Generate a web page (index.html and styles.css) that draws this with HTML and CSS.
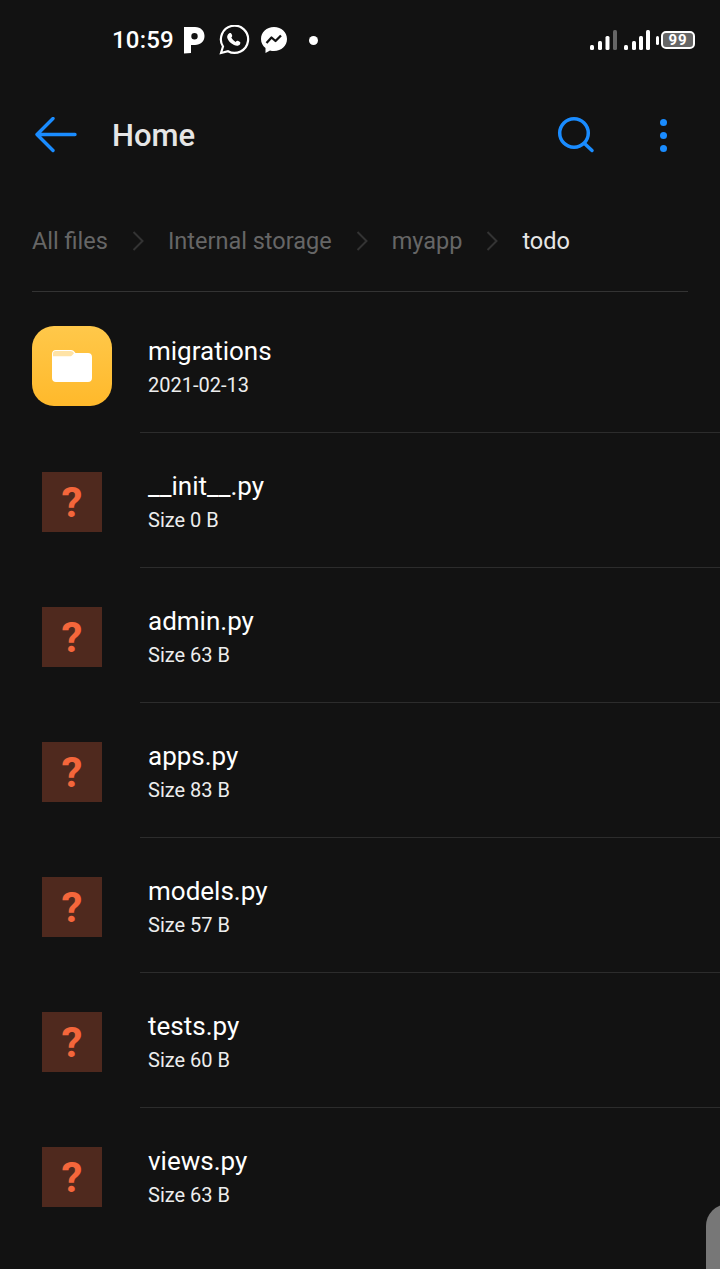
FILE: index.html
```html
<!DOCTYPE html>
<html lang="en">
<head>
    <meta charset="UTF-8">
    <meta name="viewport" content="width=device-width, initial-scale=1.0">
    <title>Home</title>
    <link rel="stylesheet" href="styles.css">
</head>
<body>

<div class="tela">
    <!-- Status bar -->
    <div class="status">
        <span class="hora">10:59</span>
        <svg class="ic-p" width="22" height="28" viewBox="0 0 22 28">
            <path fill="#fff" fill-rule="evenodd" d="M1 1H12C18 1 21.500 5 21.500 10C21.500 15.500 17.500 19 12 19H8V27L1 27.500ZM11.500 7A3.200 3.200 0 1 0 11.510 13.400A3.200 3.200 0 1 0 11.500 7Z"/>
        </svg>
        <svg class="ic-wa" width="32" height="30" viewBox="0 0 32 30">
            <path fill="none" stroke="#fff" stroke-width="2.200" d="M3 28L5 21.500A13.600 13.600 0 1 1 10 26.200Z"/>
            <path fill="#fff" d="M11 8.500C12.500 7.500 13.200 8 14 10C14.500 11.200 14 11.800 13.300 12.600C14.200 14.500 15.800 16 17.700 17C18.500 16 19.200 15.500 20.400 16.100C22.500 17.100 22.800 17.700 22 19.200C21 21 18.500 21 16 20C12.500 18.400 10.200 15.700 9.300 13C8.800 11.200 9.700 9.500 11 8.500Z"/>
        </svg>
        <svg class="ic-ms" width="28" height="28" viewBox="0 0 28 28">
            <path fill="#fff" d="M14 1C6.500 1 1 6.300 1 13C1 16.800 2.700 19.800 5.500 22V27L10 24.400C11.300 24.800 12.600 25 14 25C21.500 25 27 19.700 27 13C27 6.300 21.500 1 14 1Z"/>
            <path fill="none" stroke="#121212" stroke-width="2.300" stroke-linejoin="round" d="M6.500 17L11.500 11.500L15.500 15L21 9.500"/>
        </svg>
        <span class="ponto"></span>
        <div class="status-dir">
            <svg width="60" height="22" viewBox="0 0 60 22">
                <g fill="#fff">
                    <rect x="0" y="16" width="4" height="5" rx="1.500"/>
                    <rect x="8" y="12" width="4" height="9" rx="1.500"/>
                    <rect x="15.500" y="7" width="4" height="14" rx="1.500"/>
                    <rect x="23" y="1" width="4" height="20" rx="1.500" fill="#666"/>
                    <rect x="34" y="16" width="4" height="5" rx="1.500"/>
                    <rect x="42" y="12" width="4" height="9" rx="1.500"/>
                    <rect x="49" y="7" width="4" height="14" rx="1.500"/>
                    <rect x="56" y="1" width="4" height="20" rx="1.500"/>
                </g>
            </svg>
            <span class="bat-ponta"></span>
            <span class="bateria">99</span>
        </div>
    </div>

    <!-- Toolbar -->
    <div class="topo">
        <svg class="voltar" width="42" height="36" viewBox="0 0 42 36">
            <path fill="none" stroke="#1a8cff" stroke-width="3.400" stroke-linecap="round" stroke-linejoin="round" d="M18 1.500L2 17.500L18 33.500M2 17.500H40"/>
        </svg>
        <h1 class="titulo">Home</h1>
        <svg class="busca" width="38" height="38" viewBox="0 0 38 38">
            <circle cx="17" cy="17" r="14.300" fill="none" stroke="#1a8cff" stroke-width="3.500"/>
            <path fill="none" stroke="#1a8cff" stroke-width="3.500" stroke-linecap="round" d="M27.500 27.500L35 34.500"/>
        </svg>
        <div class="mais"><span></span><span></span><span></span></div>
    </div>

    <!-- Breadcrumb -->
    <div class="trilha">
        <span>All files</span>
        <svg class="seta" width="12" height="20" viewBox="0 0 12 20"><path d="M1.500 1L10.500 10L1.500 19"/></svg>
        <span>Internal storage</span>
        <svg class="seta" width="12" height="20" viewBox="0 0 12 20"><path d="M1.500 1L10.500 10L1.500 19"/></svg>
        <span>myapp</span>
        <svg class="seta" width="12" height="20" viewBox="0 0 12 20"><path d="M1.500 1L10.500 10L1.500 19"/></svg>
        <span class="atual">todo</span>
    </div>

    <!-- Files -->
    <div class="lista">
        <div class="item item-pasta">
            <div class="pasta">
                <svg width="40" height="32" viewBox="0 0 40 32">
                    <path fill="#fff" d="M4 0H19C21 0 22 1 23.500 3H36C38.500 3 40 4.500 40 7V28C40 30.500 38.500 32 36 32H4C1.500 32 0 30.500 0 28V4C0 1.500 1.500 0 4 0Z"/>
                    <path fill="#ffe3a6" d="M3.500 1H18.500C20 1 21 1.800 22 3.200L20 5.500C19.500 6 19 6.200 18 6.200H1V3.500C1 2 2 1 3.500 1Z"/>
                </svg>
            </div>
            <div class="info">
                <div class="nome">migrations</div>
                <div class="detalhe">2021-02-13</div>
            </div>
        </div>
        <div class="item">
            <div class="desconhecido">?</div>
            <div class="info">
                <div class="nome">__init__.py</div>
                <div class="detalhe">Size 0 B</div>
            </div>
        </div>
        <div class="item">
            <div class="desconhecido">?</div>
            <div class="info">
                <div class="nome">admin.py</div>
                <div class="detalhe">Size 63 B</div>
            </div>
        </div>
        <div class="item">
            <div class="desconhecido">?</div>
            <div class="info">
                <div class="nome">apps.py</div>
                <div class="detalhe">Size 83 B</div>
            </div>
        </div>
        <div class="item">
            <div class="desconhecido">?</div>
            <div class="info">
                <div class="nome">models.py</div>
                <div class="detalhe">Size 57 B</div>
            </div>
        </div>
        <div class="item">
            <div class="desconhecido">?</div>
            <div class="info">
                <div class="nome">tests.py</div>
                <div class="detalhe">Size 60 B</div>
            </div>
        </div>
        <div class="item item-ultimo">
            <div class="desconhecido">?</div>
            <div class="info">
                <div class="nome">views.py</div>
                <div class="detalhe">Size 63 B</div>
            </div>
        </div>
    </div>

    <div class="alca"></div>
</div>

</body>
</html>
```
FILE: styles.css
```css
/* Basic styles */
body {
    margin: 0;
    background-color: #121212;
    color: #fff;
    font-family: Roboto, sans-serif;
}

.tela {
    position: relative;
    height: 1269px;
    overflow: hidden;
}

.status {
    display: flex;
    align-items: center;
    height: 80px;
    padding: 0 25px 0 112px;
    box-sizing: border-box;
}

.hora {
    font-size: 24px;
    font-weight: 500;
    letter-spacing: 0.2px;
    width: 71px;
}

.ic-p { margin-right: 13px; }
.ic-wa { margin-right: 10px; }
.ic-ms { margin-right: 21px; }

.ponto {
    width: 9px;
    height: 9px;
    border-radius: 50%;
    background: #fff;
}

.status-dir {
    display: flex;
    align-items: center;
    margin-left: auto;
}

.bat-ponta {
    width: 3px;
    height: 9px;
    margin: 0 2px 0 6px;
    border-radius: 2px;
    background: #fff;
}

.bateria {
    width: 30px;
    height: 14px;
    border: 2px solid #fff;
    border-radius: 5px;
    background: #666;
    color: #fff;
    font-size: 15px;
    font-weight: 700;
    line-height: 14px;
    letter-spacing: 1px;
    text-align: center;
}

.topo {
    display: flex;
    align-items: center;
    height: 110px;
    padding: 0 53px 0 35px;
}

.voltar { margin-right: 35px; }

.titulo {
    flex: 1;
    margin: 0;
    color: #e6e6e6;
    font-size: 31px;
    font-weight: 500;
}

.busca { margin-right: 65px; }

.mais {
    display: flex;
    flex-direction: column;
    gap: 6px;
}

.mais span {
    width: 7px;
    height: 7px;
    border-radius: 50%;
    background: #1a8cff;
}

.trilha {
    display: flex;
    align-items: center;
    height: 100px;
    margin: 0 32px;
    padding-top: 1px;
    border-bottom: 1px solid #333;
    color: #666;
    font-size: 23.5px;
}

.seta {
    margin: 0 24px;
    fill: none;
    stroke: #333;
    stroke-width: 2;
}

.atual { color: #e6e6e6; }

.item {
    display: flex;
    height: 135px;
    padding-left: 42px;
}

.item-pasta {
    height: 141px;
    padding-left: 32px;
}

.pasta {
    display: flex;
    align-items: center;
    justify-content: center;
    flex: none;
    width: 80px;
    height: 80px;
    margin: 34px 28px 0 0;
    border-radius: 22px;
    background: linear-gradient(#ffc84a, #ffb92b);
}

.desconhecido {
    flex: none;
    width: 60px;
    height: 60px;
    margin: 39px 38px 0 0;
    background: #4f291e;
    color: #f4663b;
    font-size: 42px;
    font-weight: 700;
    line-height: 62px;
    text-align: center;
}

.info {
    flex: 1;
    padding: 37px 0 0 8px;
    border-bottom: 1px solid #2c2c2c;
}

.item-pasta .info { padding-top: 43px; }
.item-ultimo .info { border-bottom: none; }

.nome {
    font-size: 26px;
    line-height: 33px;
}

.detalhe {
    margin-top: 2px;
    color: #ededed;
    font-size: 20px;
    line-height: 30px;
}

.alca {
    position: absolute;
    right: -30px;
    top: 1204px;
    width: 44px;
    height: 90px;
    border-radius: 26px;
    background: #777;
}
```
